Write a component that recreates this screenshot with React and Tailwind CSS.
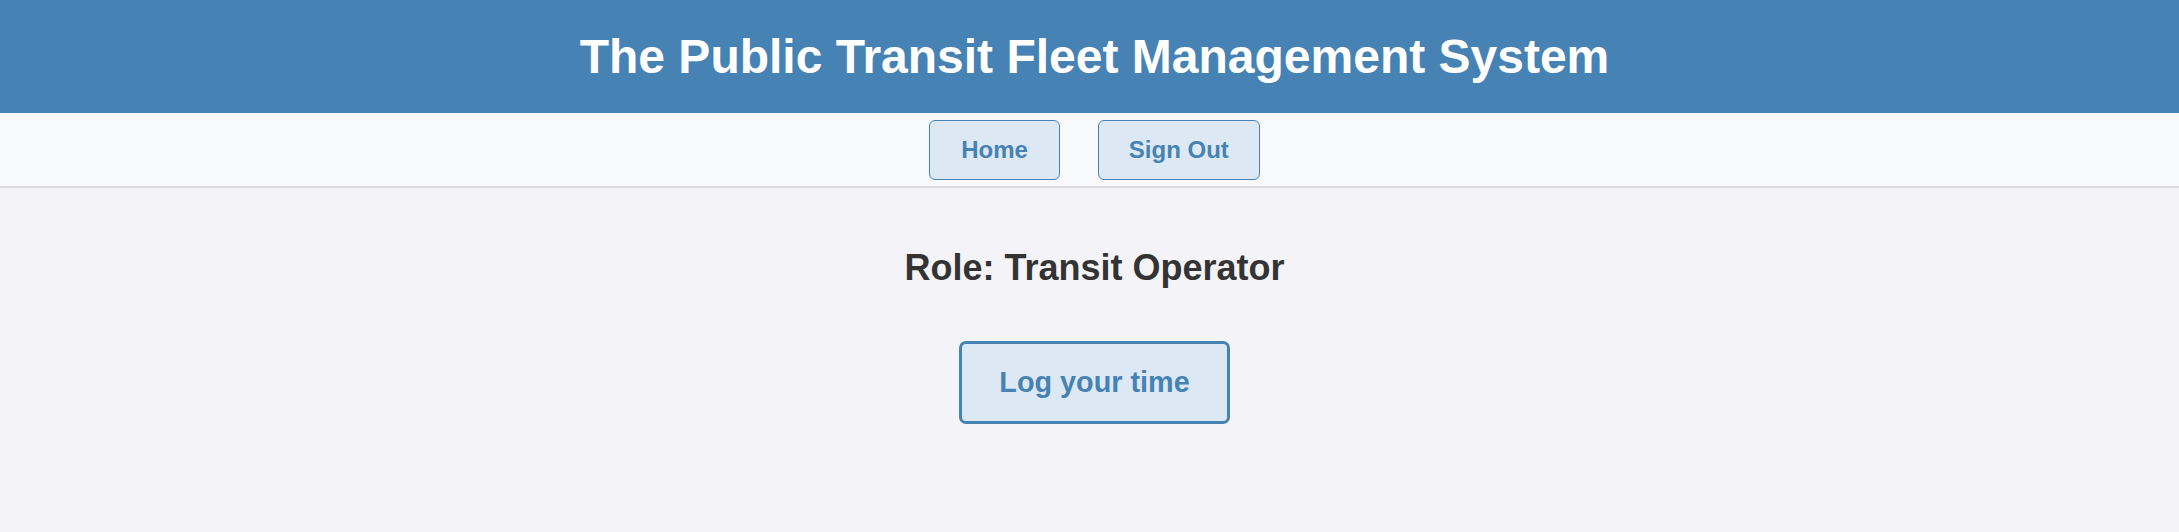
export default function App() {
  return (
    <div className="min-h-screen bg-[#f4f4f8] font-['Liberation_Sans',Arial,sans-serif]">
      {/* Header */}
      <header className="h-[113px] bg-[#4682b4] flex items-center justify-center pl-[10px]">
        <h1 className="text-[48px] leading-[1.15] font-bold text-white">
          The Public Transit Fleet Management System
        </h1>
      </header>

      {/* Nav */}
      <nav className="bg-[#f8f9fa] border-b-2 border-[#dddddd] flex justify-center gap-[38px] pt-[7px] pb-[6px] pl-[10px]">
        <button className="px-[31px] py-[15px] text-[24px] leading-[1.15] font-bold text-[#4682b4] bg-[#dce9f5] border border-[#4682b4] rounded-[6px]">
          Home
        </button>
        <button className="px-[30px] py-[15px] text-[24px] leading-[1.15] font-bold text-[#4682b4] bg-[#dce9f5] border border-[#4682b4] rounded-[6px]">
          Sign Out
        </button>
      </nav>

      {/* Main */}
      <main className="flex flex-col items-center pt-[59px] pl-[10px]">
        <h2 className="text-[36px] leading-[1.15] font-bold text-[#333333]">
          Role: Transit Operator
        </h2>
        <button className="mt-[53px] px-[37px] py-[22px] text-[28.8px] leading-[1.15] font-bold text-[#4682b4] bg-[#dce9f5] border-[3px] border-[#4682b4] rounded-[7px]">
          Log your time
        </button>
      </main>
    </div>
  )
}
